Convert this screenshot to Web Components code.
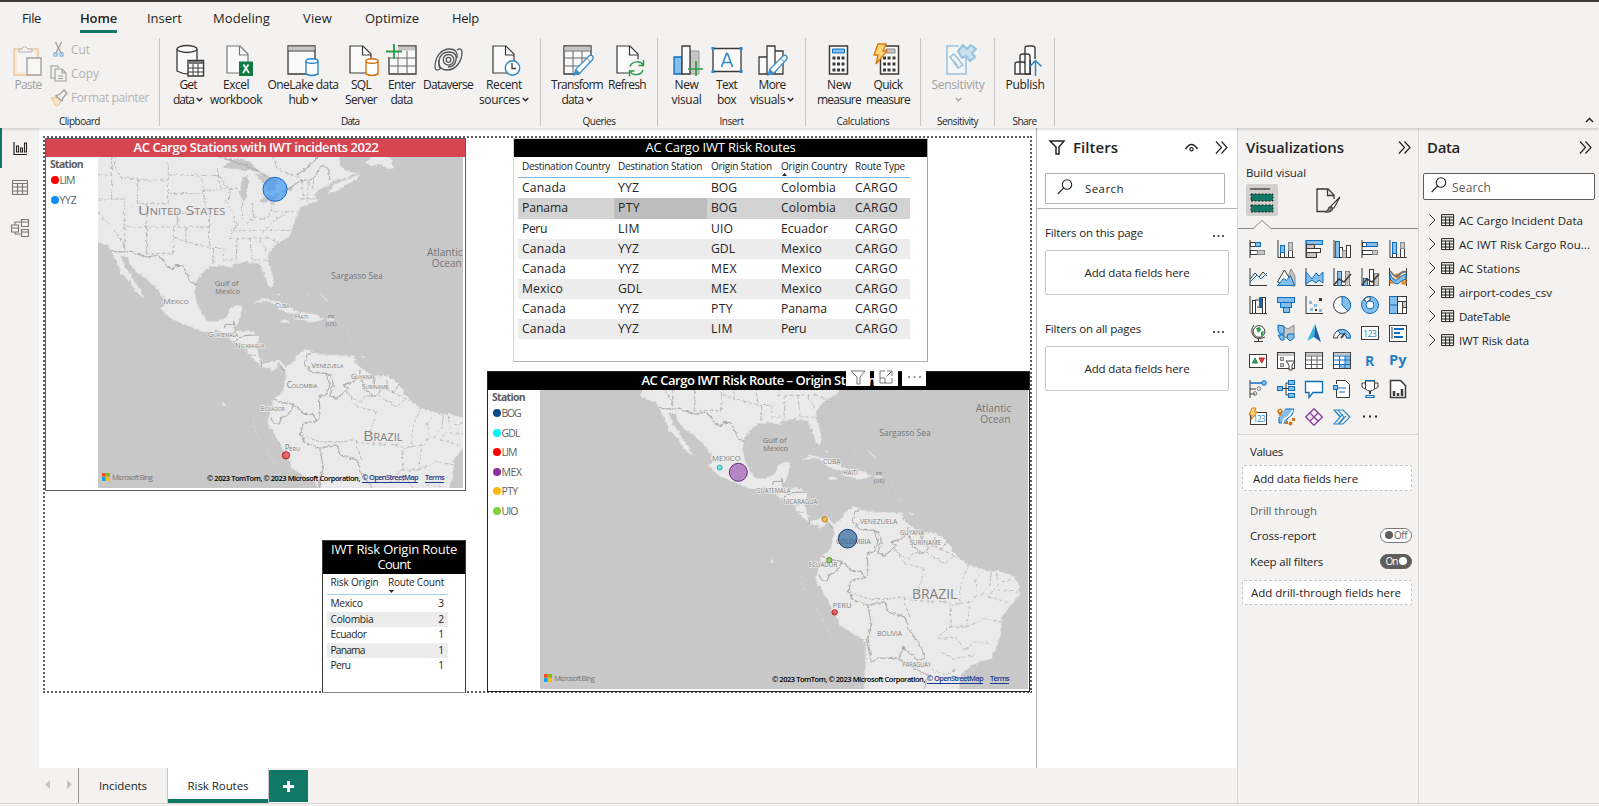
<!DOCTYPE html>
<html lang="en">
<head>
<meta charset="utf-8">
<title>Risk Routes</title>
<style>
html,body{margin:0;height:100%;overflow:hidden}
body{font:12px "Open Sans","Noto Sans",sans-serif;color:#252423;background:#f3f2f1}
</style>
</head>
<body>
<report-app></report-app>
<script>
const define = (name, render) => customElements.define(name, class extends HTMLElement {
  connectedCallback() {
    if (this.shadowRoot) return;
    this.attachShadow({mode: 'open'}).innerHTML = render(this);
  }
});

/* A single line of text, tracked so that it fills its given width. */
customElements.define('fit-text', class extends HTMLElement {
  connectedCallback() {
    if (this.shadowRoot) return;
    const w = +this.getAttribute('w');
    this.attachShadow({mode: 'open'}).innerHTML =
      `<style>:host{display:inline-block;white-space:nowrap;text-align:left;flex:none;width:${w}px}span{display:inline-block;text-decoration:inherit}</style><span><slot></slot></span>`;
    const s = this.shadowRoot.querySelector('span');
    const n = this.textContent.length;
    s.style.letterSpacing = ((w - s.getBoundingClientRect().width) / n).toFixed(3) + 'px';
  }
});
const ft = (t, w, style = '') => `<fit-text w="${w}" style="${style}">${t}</fit-text>`;

/* ---------- icons ---------- */
const K = '#3b3a39', B = '#0f6cbd', L = '#83beec', G = '#c8c6c4';
const doc = `<path d="M3 2h13l8 8v19H3z" fill="#fafafa" stroke="${K}" stroke-width="1.2"/><path d="M15.500 2v9h8.500" fill="none" stroke="${K}" stroke-width="1.2"/>`;
const pencil = `<path d="M12 31l2-6L27 12q2-1.500 3.500 0t0 3.500L18 29z" fill="#fff" stroke="#3a8fce" stroke-width="1.300"/><path d="M12 31l2-6 4 4z" fill="#3a8fce"/><path d="M24.500 14l4 4" stroke="#3a8fce"/>`;
const cyl = (c) => `<path d="M19 17v13q6 3 12 0V17" fill="#fff" stroke="${c}" stroke-width="1.400"/><ellipse cx="25" cy="17" rx="6" ry="2.200" fill="#fff" stroke="${c}" stroke-width="1.400"/>`;
const big = {
  paste: `<g opacity=".5"><path d="M2 5h24v26H2z" fill="#fbe5c0" stroke="#e8a55a" stroke-width="1.600"/><path d="M5 8h18v20H5z" fill="#f7f6f5"/><path d="M7 8V5h3q2-5 6 0h4v3z" fill="#f3f2f1" stroke="#777"/><path d="M15 14h14v17H15z" fill="#fafafa" stroke="#555" stroke-width="1.400"/></g>`,
  getdata: `<path d="M3 5v22q9 5 20 1V5" fill="#fafafa" stroke="${K}" stroke-width="1.300"/><ellipse cx="13" cy="5" rx="10" ry="3.500" fill="#fafafa" stroke="${K}" stroke-width="1.300"/><path d="M14 16.500h15.500V32H14z" fill="#fff" stroke="${K}" stroke-width="1.400"/><path d="M14 18.500h15" stroke="#777" stroke-width="3"/><path d="M14 24h15M14 28h15M19 20v12M24 20v12" stroke="${K}"/>`,
  excel: doc.replaceAll(K, '#777') + `<path d="M15 17.500h14V32H15z" fill="#107c41"/><path d="M19.500 20.500l5.500 8.500M24.500 20.500l-5.500 8.500" stroke="#fff" stroke-width="1.800"/>`,
  onelake: `<path d="M1 2h27v28H1z" fill="#fafafa" stroke="${K}" stroke-width="1.300"/><path d="M1.500 4.500h26" stroke="${G}" stroke-width="4"/><path d="M1 7h27" stroke="${K}"/>` + cyl('#2b88c8'),
  sql: doc + cyl('#d8700f'),
  enter: `<path d="M3 2h27v28H3z" fill="#fafafa" stroke="${K}" stroke-width="1.300"/><path d="M12 4.500h17" stroke="${G}" stroke-width="4"/><path d="M3 14h27M3 22h27M12 7v23M21 7v23" stroke="#666"/><path d="M0 0h12v13H0z" fill="#f3f2f1"/><path d="M8 0v15M0 7.500h16" stroke="#2a9d4a" stroke-width="1.800"/>`,
  dataverse: `<g fill="none" stroke="#555" stroke-width="1.300"><path d="M24 6c3-2 5-1 5 2 0 8-5 18-15 18-6 0-9-4-8-9 1-6 5-9 10-9 6 0 8 4 7 8-1 5-4 7-8 7"/><path d="M7 25c-3 2-5 1-5-2C2 14 7 5 17 5c6 0 8 5 7 9M8 25c-2-1-3-5-2-9"/><ellipse cx="15.500" cy="15.800" rx="5.300" ry="5.300"/><ellipse cx="15.500" cy="15.800" rx="2.300" ry="2.500"/></g>`,
  recent: doc + `<circle cx="22.500" cy="24" r="7.200" fill="#fff" stroke="#2b88c8" stroke-width="1.400"/><path d="M22 19v5.500h4" fill="none" stroke="${K}" stroke-width="1.300"/>`,
  transform: `<path d="M2 2h27v28H2z" fill="#fafafa" stroke="${K}" stroke-width="1.300"/><path d="M2.500 4.500h26" stroke="${G}" stroke-width="4"/><path d="M2 7h27M2 14h27M2 22h27M11 7v23M20 7v23" stroke="#666"/><path d="M17 31l14-16v17z" fill="#f3f2f1"/>` + pencil,
  refresh: doc + `<circle cx="22.500" cy="24" r="9" fill="#f3f2f1"/><path d="M16 22.500c2-6 11-6 13-1M29.500 16v5.500h-5M29 26c-2 6-11 6-13 1M15.500 32.500V27h5" fill="none" stroke="#2a9d4a" stroke-width="1.500"/>`,
  newvisual: `<path d="M19 7h9v23h-9z" fill="${G}" stroke="#999"/><path d="M3 13h8v17H3z" fill="${L}" stroke="${B}" stroke-width="1.300"/><path d="M11 2h8v28h-8z" fill="#fafafa" stroke="${K}" stroke-width="1.300"/><path d="M25 17v15M17 25h15" stroke="#2a9d4a" stroke-width="1.700"/>`,
  textbox: `<path d="M2 4.500h28v23H2z" fill="#fafafa" stroke="${K}" stroke-width="1.300"/><path d="M.5 3h3v3h-3zM28.500 3h3v3h-3zM.5 26h3v3h-3zM28.500 26h3v3h-3z" fill="#2b88c8"/><path d="M10.500 23L15.500 9.500h1L21.500 23M12.500 18.500h7" fill="none" stroke="#2b88c8" stroke-width="1.600"/>`,
  morevisuals: `<path d="M3 13h8v17H3zM19 7h8v23h-8zM11 2h8v28h-8z" fill="#fafafa" stroke="${K}" stroke-width="1.300"/>` + pencil,
  calc: `<path d="M6.500 2h18v28h-18z" fill="#fafafa" stroke="${K}" stroke-width="1.500"/><path d="M9.500 5h12v4h-12z" fill="${L}" stroke="${B}"/><path d="M11 12.500v16M15.500 12.500v16M20 12.500v16" stroke="${K}" stroke-width="3" stroke-dasharray="3 3"/>`,
  quick: `<path d="M8.500 2h18v28h-18z" fill="#fafafa" stroke="${K}" stroke-width="1.500"/><path d="M14 5h9v4h-9z" fill="${G}" stroke="#888"/><path d="M12.500 12.500v16M17 12.500v16M22 12.500v16" stroke="${K}" stroke-width="3" stroke-dasharray="3 3"/><path d="M6 0h8l-3 7h4L4 20l2-9H2z" fill="#fcd679" stroke="#e07a10" stroke-width="1.400"/>`,
  sens: `<g opacity=".45" fill="none" stroke="#2b88c8"><path d="M21 12v18H2V2h12" stroke-width="1.500" fill="#f6fafd"/><path d="M9 10l9 11-5 3-8-11zM8 16l5 6M12 13l4 6" stroke-width="1.400"/><path d="M13 7l5-6 4 4 4-4 5 4-4 4 3 4-5 4-4-5-4 2z" fill="#9cc9e8" stroke-width="2"/></g>`,
  publish: `<g fill="#fafafa" stroke="${K}" stroke-width="1.400"><path d="M12 30V4q0-2 3-2h4q3 0 3 2v26zM7 30V12q0-2 3-2h4q3 0 3 2v18zM2 30V20q0-2 3-2h5q2 0 2 2v10z"/></g><path d="M18 15h10v17H18z" fill="#f3f2f1"/><path d="M17.300 16v14H12" stroke="${K}" stroke-width="1.300"/><path d="M22.500 32V17M17 22.500l5.500-6 6 6" fill="none" stroke="#2b88c8" stroke-width="1.500"/>`
};
const nudge = {getdata: 2, excel: 4, sql: 2, recent: 1.5, refresh: 3, transform: 1, publish: 4, sens: 3, dataverse: 1};
const svg = (body, w = 32, h = w, vb = `0 0 ${w} ${h}`) => `<svg width="${w}" height="${h}" viewBox="${vb}" fill="none" overflow="visible">${body}</svg>`;
const dbl = svg(`<path d="M1 .5l5.500 6L1 12.500M6.500.5l5.500 6-5.500 6" stroke="#252423" stroke-width="1.200"/>`, 14, 13);
const mag = svg(`<circle cx="10" cy="5.500" r="4.700" stroke="#252423" stroke-width="1.100"/><path d="M6.700 9L.7 15" stroke="#252423" stroke-width="1.100"/>`, 16, 16);
const chev = svg(`<path d="M.7 1L3.500 3.800 6.300 1" stroke="currentColor" stroke-width="1.400"/>`, 7, 5);

/* ---------- ribbon ---------- */
define('ribbon-button', el => {
  const lines = el.getAttribute('lines').split('|').map(l => l.split(':'));
  const icon = el.getAttribute('icon');
  return `<style>:host{display:flex;flex-direction:column;align-items:center;width:${el.getAttribute('w')}px;font-size:12px;line-height:15.300px;flex:none}
  svg{display:block}.i{height:33px;padding-left:${(nudge[icon] || 0) * 2}px}.l{display:flex;align-items:center;gap:2px;height:15.300px;justify-content:center}:host([dim]){color:#a19f9d}</style>
  <div class="i">${svg(big[icon])}</div>${lines.map(l => `<div class="l">${l[0] ? ft(l[0], l[1]) : ''}${l[2] ? chev : ''}</div>`).join('')}`;
});
define('ribbon-group', el => `<style>:host{display:flex;flex-direction:column;justify-content:space-between;box-sizing:border-box;width:${el.getAttribute('w')}px;height:88px;border-right:1px solid #c8c6c4;flex:none}
  .b{display:flex;padding:6px 0 0 ${el.getAttribute('pad') || 0}px}.n{display:flex;justify-content:center;font-size:10px;line-height:12px;margin-bottom:-1px}</style>
  <div class="b"><slot></slot></div><div class="n">${ft(el.getAttribute('name'), el.getAttribute('nw'))}</div>`);
const rb = (icon, w, lines, extra = '') => `<ribbon-button icon="${icon}" w="${w}" lines="${lines}" ${extra}></ribbon-button>`;
define('clip-tools', () => `<style>:host{display:flex;flex-direction:column;color:#b5b3b1;font-size:12px;padding:0 0 0 1px;margin-top:-7px}
  div{display:flex;height:24px;align-items:center;gap:4px}svg{opacity:.6}</style>
  <div>${svg('<path d="M5.500 1l6 12M11.500 1l-6 12" stroke="#666" stroke-width="1.300"/><rect x="4" y="12" width="3" height="3" stroke="#3a8fce" stroke-width="1.300"/><rect x="10" y="12" width="3" height="3" stroke="#3a8fce" stroke-width="1.300"/>', 17)}${ft('Cut', 19)}</div>
  <div>${svg('<path d="M8 3V1H1v12h4M5 4h7l4 4v8H5zM12 4v4h4M8 11h5M8 13.500h5" stroke="#666" stroke-width="1.100"/>', 17)}${ft('Copy', 28)}</div>
  <div>${svg('<path d="M1 9l6-1 4 4-2 4-3 1z" fill="#fbd9a8" stroke="#e8a55a"/><path d="M6 7l6 5 1-3 4-5-3-3-4 4z" stroke="#666" stroke-width="1.300"/>', 17)}${ft('Format painter', 78)}</div>`);
define('ribbon-bar', () => {
  const tabs = [['File', 19, 22], ['Home', 37, 39], ['Insert', 35, 30], ['Modeling', 57, 31], ['View', 29, 33], ['Optimize', 54, 33], ['Help', 27, 33]];
  return `<style>:host{display:flex;flex-direction:column;height:128px;background:#f3f2f1;border-top:2px solid #3b3a39;box-sizing:border-box;box-shadow:0 1px 3px #0003;position:relative;z-index:2}
  nav{display:flex;height:31px;font-size:13px;line-height:33px;margin-bottom:5px}nav span{height:28px}
  nav .on{font-weight:600;border-bottom:3px solid #117865}
  .r{display:flex;align-items:flex-start}.c{margin-left:auto;margin-right:5px;align-self:flex-end;height:16px}</style>
  <nav>${tabs.map(t => `<span class="${t[0] == 'Home' ? 'on' : ''}" style="margin-left:${t[2]}px">${ft(t[0], t[1])}</span>`).join('')}</nav>
  <div class="r">
  <ribbon-group w="160" pad="12" name="Clipboard" nw="41">${rb('paste', 32, 'Paste:27', 'dim')}<clip-tools style="margin-left:5px"></clip-tools></ribbon-group>
  <ribbon-group w="381" pad="6" name="Data" nw="18">${rb('getdata', 44, 'Get:17|data:21:1')}${rb('excel', 52, 'Excel:26|workbook:52')}${rb('onelake', 82, 'OneLake data:71|hub:20:1')}${rb('sql', 34, 'SQL:20|Server:32')}${rb('enter', 47, 'Enter:27|data:22')}${rb('dataverse', 46, 'Dataverse:50')}${rb('recent', 66, 'Recent:36|sources:41:1')}</ribbon-group>
  <ribbon-group w="117" pad="8" name="Queries" nw="33">${rb('transform', 56, 'Transform:52|data:22:1')}${rb('refresh', 44, 'Refresh:38')}</ribbon-group>
  <ribbon-group w="148" pad="6" name="Insert" nw="24">${rb('newvisual', 45, 'New:24|visual:30')}${rb('textbox', 35, 'Text:21|box:19')}${rb('morevisuals', 56, 'More:27|visuals:35:1')}</ribbon-group>
  <ribbon-group w="115" pad="8" name="Calculations" nw="53">${rb('calc', 50, 'New:24|measure:44')}${rb('quick', 48, 'Quick:29|measure:44')}</ribbon-group>
  <ribbon-group w="74" name="Sensitivity" nw="41">${rb('sens', 74, 'Sensitivity:53|::1', 'dim')}</ribbon-group>
  <ribbon-group w="60" name="Share" nw="24">${rb('publish', 60, 'Publish:39')}</ribbon-group>
  <span class="c">${svg('<path d="M1 5l3.500-3.500L8 5" stroke="#252423" stroke-width="1.500"/>', 9, 6)}</span></div>`;
});

/* ---------- view rail ---------- */
define('view-rail', () => `<style>:host{display:flex;flex-direction:column;width:39px;background:#f3f2f1;flex:none}
  div{height:40px;display:flex;align-items:center;justify-content:center;box-sizing:border-box}div.on{border-left:2px solid #117865;padding-right:1px}svg{display:block}</style>
  <div class="on">${svg('<path d="M1 1v12.500h13" stroke="#252423" stroke-width="1.200"/><path d="M3.500 5h2v6h-2zM7.500 7h2v4h-2zM11.500 2h2v9h-2z" stroke="#252423" stroke-width="1.100"/>', 15)}</div>
  <div style="padding-bottom:2px">${svg('<path d="M.5.5h15v14H.5zM.5 3.500h15M.5 7h15M.5 11h15M5.500 3v12M10.500 3v12" stroke="#797775" stroke-width="1.100"/>', 16, 15)}</div>
  <div>${svg('<path d="M.5 6h7v7h-7zM.5 9h7M10.500.500h7v7h-7zM10.500 3h7M10.500 10.500h7v7h-7zM10.500 13h7M4 6V3h6M4 13v2h6" stroke="#797775" stroke-width="1.100"/>', 18)}</div>`);

/* ---------- map ---------- */
const coast = 'M280 90V345L325 362 333 375 345 400 352 418 362 430 362 447 385 462 398 485 408 500 430 520 433 512 420 492 405 472 393 455 385 440 370 418 362 395 374 390 385 398 388 415 400 430 415 445 440 462 460 480 478 500 490 515 493 540 485 548 490 562 520 585 560 600 600 618 625 620 650 612 665 628 690 642 700 652 720 657 738 668 748 690 765 705 785 725 808 728 820 738 832 728 828 716 838 714 846 722 857 735 858 760 850 795 838 812 820 822 815 850 803 888 808 905 825 928 845 965 868 1010 875 1030 900 1045 935 1065 953 1082 955 1130 945 1250H1228L1240 1175 1280 1145 1328 1130 1344 1100 1360 1050 1360 1005 1392 965 1414 940 1412 905 1392 880 1350 868 1330 868 1285 858 1262 850 1225 822 1210 800 1195 775 1165 755 1120 752 1090 735 1062 712 1065 694 1010 692 970 690 935 682 925 672 890 690 880 710 862 722 857 728 850 715 835 705 815 712 790 718 780 700 770 682 773 650 780 632 755 620 715 618 705 612 715 590 722 570 728 545 712 540 690 550 683 575 655 590 625 590 608 570 590 535 583 500 590 470 600 450 630 425 660 420 695 428 700 415 740 410 780 415 790 440 800 465 808 485 816 490 820 470 815 440 802 410 805 385 830 358 850 345 870 330 878 305 885 285 895 265 900 245 920 240 950 228 942 210 955 195 985 180 1000 165 1040 158 1078 142 1060 144 1030 136 1018 118 1022 90Z';
const lands = 'M1095 112L1125 90 1172 96 1180 130 1160 128 1145 118 1110 122ZM985 205L1000 180 1040 165 1080 148 1070 162 1030 185 1000 202ZM762 534L790 520 830 527 868 548 900 562 868 566 848 555 812 530 790 528ZM882 578L905 564 942 568 972 582 935 592 910 584ZM840 586L855 584 868 590 855 593ZM980 578H1002V586H980ZM668 832L678 838 674 843ZM1085 692h10v4h-10ZM835 508h8v3h-8ZM960 505l22 20-4 1Z';
const lakes = 'M728 160L738 152 748 158 742 190 738 222 724 226 718 205ZM668 128L705 100 745 105 772 134 748 138 715 132ZM762 145L800 150 830 165 828 195 808 200 790 175ZM780 228L800 212 838 205 830 220 792 234ZM842 198L880 182 876 194 848 204ZM388 232l10 12-3 2Z';
const border = 'M333 375L345 380 400 382 440 396 470 391 490 405 500 425 520 432 525 422 545 422 555 435 572 472 592 478M672 612L678 598H700L698 590 708 588M702 588L706 612 690 640M700 650L730 632 775 630M742 668L775 660M750 690L768 690M785 725L783 708M845 722L850 738M935 680L920 690 915 720 935 742 978 745 990 778 980 808 958 815 960 880 948 888 940 868 915 868 880 838 845 832 820 822M880 838L872 862 845 878 838 895 820 893 812 878M978 745L992 752 1000 778 990 812 1010 822 1045 790 1030 780 1060 770 1080 750M1080 735L1078 760 1095 775 1092 790 1120 815 1140 800 1135 785 1165 795 1160 765M1120 752L1125 790M1165 795L1180 800 1200 778M948 888L910 895 900 930 920 955 960 970 1010 958 1020 990 1070 1005 1085 1045 1120 1095 1130 1130 1110 1135 1065 1095 1052 1130 990 1128 970 1140 955 1070M960 970L970 1030 960 1070 970 1140M1052 1130L1110 1165 1140 1180 1130 1220M860 195L900 168 940 162 965 122 985 130 990 165M820 165L760 130 650 90M890 150L930 120 960 90';
const states = 'M294 222H374L374 306H628M374 306V400M335 90V222M346 90V130L366 160H412V236H505V90M412 165H505M505 150L658 152M505 205L605 206M505 265H532V306M440 236V386M532 262H625M605 195H670M628 280V370L680 370M520 308V386H440M440 308V380M558 308V350L628 368M625 265L628 306M605 160L612 220 622 262M658 152L690 200 688 225M652 130L660 190H718M676 225L700 270 710 300 690 340M690 316H878M690 340H800M728 228L727 285L700 312M758 230V285L730 300M758 275L790 285 812 262 822 230 800 228M712 340L708 410M750 340L756 408M780 340L800 380M756 405H800M640 370L642 420M672 370L670 405H698M800 335L848 362M815 232V260H895M905 168L912 222M925 168L922 235M940 165V200M900 222H945M790 320L830 280 860 268M820 90L830 130 900 160M520 338L558 350M294 150H335M294 260L370 350 374 370M900 930L960 950 1030 950 1060 945 1090 955 1205 960M1130 860L1112 920 1090 955M1180 800L1230 830M1030 780L1050 815 1080 830 1100 812 1140 815 1190 845 1220 820M1050 815L1075 850 1095 850 1130 860M1262 850L1240 900 1235 965 1210 970 1205 1035 1170 1065M1235 965L1270 960 1290 935 1280 900 1300 870M1330 870L1325 910 1300 940M1345 870L1350 910 1320 945 1380 960M1360 900L1395 895M1350 925L1410 930M1205 1035L1255 1035 1310 1010 1360 1020M1255 1035L1265 970M1170 1070L1220 1065 1250 1105 1280 1080 1330 1085M1180 1110L1220 1130 1280 1120M1150 1160L1190 1180 1230 1160M1065 945L1085 1005M1205 960L1210 1035';
/* text, x, baseline y, width, size, map style */
const labels = [
  ['United States', 414, 270, 262, 40, 1], ['Mexico', 490, 538, 76, 24, 1], ['Cuba', 824, 549, 44, 22, 1], ['Haiti', 884, 581, 42, 22, 1], ['Guatemala', 624, 637, 90, 22, 1], ['Nicaragua', 706, 669, 88, 22, 1], ['Venezuela', 934, 728, 96, 23, 1], ['Guyana', 1053, 761, 64, 21, 1], ['Suriname', 1085, 793, 80, 21, 1], ['Colombia', 860, 789, 92, 25, 1], ['Ecuador', 782, 858, 72, 23, 1], ['Peru', 854, 977, 46, 25, 1], ['Brazil', 1090, 949, 118, 46, 1],
  ['MEXICO', 492, 537, 86, 20, 2], ['CUBA', 825, 546, 52, 19, 2], ['HAITI', 886, 578, 44, 19, 2], ['GUATEMALA', 625, 634, 102, 19, 2], ['NICARAGUA', 706, 665, 102, 19, 2], ['VENEZUELA', 936, 725, 112, 20, 2], ['GUYANA', 1056, 758, 72, 19, 2], ['SURINAME', 1085, 790, 94, 20, 2], ['COLOMBIA', 864, 785, 104, 21, 2], ['ECUADOR', 782, 856, 86, 20, 2], ['PERU', 854, 977, 56, 22, 2], ['BRAZIL', 1092, 950, 136, 43, 2], ['BOLIVIA', 988, 1062, 74, 22, 2], ['PARAGUAY', 1063, 1155, 86, 20, 2]
];
const seas = [['Gulf of', 644, 482, 72, 23], ['Mexico', 646, 507, 74, 23], ['Sargasso Sea', 994, 461, 154, 25], ['Atlantic', 1281, 392, 107, 32], ['Ocean', 1295, 426, 90, 32], ['PR', 984, 583, 18, 18], ['(US)', 977, 602, 32, 18]];
define('bing-map', el => {
  const [x, y, w, h] = el.getAttribute('view').split(' ').map(Number);
  const kind = +el.getAttribute('kind');
  const txt = (t, sc) => `<text x="${t[1]}" y="${t[2]}" textLength="${t[3]}" lengthAdjust="spacingAndGlyphs" font-size="${t[4]}" ${sc ? 'font-variant="small-caps"' : ''}>${t[0]}</text>`;
  const pins = JSON.parse(el.getAttribute('pins'));
  return `<style>:host{display:block;position:relative;width:${w}px;height:${h}px;overflow:hidden}svg{display:block}
  .cr{position:absolute;right:19px;bottom:4px;display:flex;gap:7px;font-size:7.500px;line-height:12px;color:#000;font-weight:600}.cr a{color:#1a3a8f;line-height:8px;height:9px;border-bottom:1px solid #1a3a8f;margin-top:1px}
  .bg{position:absolute;left:4px;bottom:5px;display:flex;gap:2px;align-items:center;font-size:7.500px;line-height:12px;color:#777}</style>
  <svg width="${w}" height="${h}" viewBox="${x * 3} ${(y - 125) * 3} ${w * 3} ${h * 3}">
  <defs><filter id="f" x="0" y="0" width="100%" height="100%"><feTurbulence type="fractalNoise" baseFrequency=".09" numOctaves="3" seed="4"/><feDisplacementMap in="SourceGraphic" scale="12" xChannelSelector="R" yChannelSelector="G"/></filter></defs>
  <rect x="-100" y="0" width="1700" height="1300" fill="#c8c8c8"/>
  <g filter="url(#f)"><rect x="-100" y="0" width="1700" height="1300" fill="#c8c8c8"/><path d="${coast}${lands}" fill="#eaeaea" stroke="#e2e2e2" stroke-width="2"/><path d="${lakes}" fill="#c8c8c8"/>
  <path d="${states}" fill="none" stroke="#b9b4b4" stroke-width="2.600" stroke-dasharray="12 5"/><path d="${border}" fill="none" stroke="#b3adad" stroke-width="3.500"/>
  <path d="M760 880Q762 930 790 960T850 1070M880 510l10 4M920 510l8 3M1030 600l20 40M1055 650l5 15" fill="none" stroke="#d4d4d4" stroke-width="2.500" stroke-dasharray="12 6"/></g>
  <g font-family="Open Sans,Noto Sans,sans-serif" fill="#808080" stroke="#ececec" stroke-width="4" paint-order="stroke" stroke-linejoin="round">${labels.filter(l => l[5] == kind).map(l => txt(l, kind == 1)).join('')}</g>
  <g font-family="Open Sans,Noto Sans,sans-serif" fill="#757575">${seas.map(l => txt(kind == 2 && l[1] > 1200 ? [l[0], l[1] + 2, l[2] - 2, l[3], l[4]] : l)).join('')}</g>
  ${pins.map(p => `<circle cx="${p[0]}" cy="${p[1]}" r="${p[2]}" fill="${p[3]}" fill-opacity=".65" stroke="${p[4]}" stroke-width="3"/>`).join('')}</svg>
  <div class="bg">${svg('<path d="M0 0h3.700v3.700H0z" fill="#f25022"/><path d="M4.200 0h3.700v3.700H4.200z" fill="#7fba00"/><path d="M0 4.200h3.700v3.700H0z" fill="#00a4ef"/><path d="M4.200 4.200h3.700v3.700H4.200z" fill="#ffb900"/>', 8)}${ft('Microsoft Bing', 40)}</div>
  <div class="cr">${ft('© 2023 TomTom, © 2023 Microsoft Corporation,', 153, 'margin-right:-5px')}<a>${ft('© OpenStreetMap', 56)}</a><a>${ft('Terms', 19)}</a></div>`;
});
define('map-legend', el => `<style>:host{display:flex;flex-direction:column;color:#605e5c;font-size:10.500px;width:52px;flex:none;box-sizing:border-box;padding:0 0 0 4px}
  b{font-size:10.500px;line-height:15px;height:13.500px}div{display:flex;align-items:center;gap:1px;height:19.500px}i{width:8px;height:8px;border-radius:50%;margin-left:.5px}</style>
  <b>${ft('Station', 33)}</b>${JSON.parse(el.getAttribute('items')).map(t => `<div><i style="background:${t[1]}"></i>${ft(t[0], t[2])}</div>`).join('')}`);

/* ---------- visual card ---------- */
define('report-visual', el => `<style>:host{display:flex;flex-direction:column;position:absolute;box-sizing:border-box;background:#fff}
  header{background:${el.getAttribute('head') || '#000'};color:#fff;font-size:13px;text-align:center;flex:none;display:flex;flex-direction:column;align-items:center;line-height:15px;padding:1px 0 2px;${el.hasAttribute('bold') ? 'font-weight:600' : ''}}
  .b{display:flex;flex:1;min-height:0}</style>
  <header><slot name="title"></slot></header><div class="b"><slot></slot></div>`);
define('hover-actions', () => `<style>:host{position:absolute;left:358px;top:-4px;display:flex;gap:4px}span{width:24px;height:18px;background:#fff;display:flex;align-items:center;justify-content:center}</style>
  <span>${svg('<path d="M1 1h14L10 7v7H7V7z" stroke="#777" stroke-width="1"/>', 16, 15)}</span><span>${svg('<path d="M6 1H1v12h12V8M1 8h5v5M8 1h5v5M13 1L7.500 6.500" stroke="#777" stroke-width="1"/>', 14)}</span><span>${svg('<path d="M1 1h2M6.500 1h2M12 1h2" stroke="#777" stroke-width="1.600"/>', 15, 3)}</span>`);

define('routes-table', () => {
  const W = {Canada: 44, Panama: 46, Peru: 25, Mexico: 41, YYZ: 21, PTY: 22, LIM: 22, GDL: 24, BOG: 26, UIO: 22, MEX: 26, Colombia: 55, Ecuador: 47, CARGO: 43};
  const rows = ['Canada YYZ BOG Colombia', 'Panama PTY BOG Colombia', 'Peru LIM UIO Ecuador', 'Canada YYZ GDL Mexico', 'Canada YYZ MEX Mexico', 'Mexico GDL MEX Mexico', 'Canada YYZ PTY Panama', 'Canada YYZ LIM Peru'];
  return `<style>:host{display:block;margin-left:4px;width:392px}.g{display:grid;grid-template-columns:96px 93px 70px 74px 59px}
  .h{font-size:10px;height:20px;border-bottom:1px solid #7ab8ec;line-height:18px;margin-bottom:.3px}.r{height:20.120px;font-size:12.200px;line-height:20px;color:#252423}.g>*{padding-left:4px}.h>*{position:relative}
  .r:nth-of-type(odd){background:#ececec}.r.s{background:#d3d3d3}.r.s :nth-child(2){background:#bdbdbd}u{position:absolute;left:5px;top:15px;line-height:0}</style>
  <div class="g h"><div>${ft('Destination Country', 88)}</div><div>${ft('Destination Station', 84)}</div><div>${ft('Origin Station', 61)}</div><div>${ft('Origin Country', 66)}<u>${svg('<path d="M0 3L2.500 0 5 3z" fill="#252423"/>', 5, 3)}</u></div><div>${ft('Route Type', 50)}</div></div>
  ${rows.map((r, i) => `<div class="g r ${i == 1 ? 's' : ''}">${(r + ' CARGO').split(' ').map(c => `<div>${ft(c, W[c])}</div>`).join('')}</div>`).join('')}`;
});
define('count-table', () => {
  const rows = [['Mexico', 3, 32], ['Colombia', 2, 43], ['Ecuador', 1, 36], ['Panama', 1, 34], ['Peru', 1, 20]];
  return `<style>:host{display:block;margin-left:4px;width:121px;font-size:10px}div{display:flex;justify-content:space-between;padding:0 4px 0 3.500px}.h{height:20px;border-bottom:1px solid #a8d2f5;line-height:16px;margin-bottom:1px;position:relative;font-size:10px}
  .r{height:15.600px;line-height:15.600px;font-size:10.200px}.r:nth-of-type(odd){background:#ececec}u{position:absolute;left:62px;top:15px;line-height:0}</style>
  <div class="h">${ft('Risk Origin', 48)}${ft('Route Count', 56)}<u>${svg('<path d="M0 0L2.500 3 5 0z" fill="#252423"/>', 5, 3)}</u></div>
  ${rows.map(r => `<div class="r">${ft(r[0], r[2])}<span>${r[1]}</span></div>`).join('')}`;
});

/* ---------- canvas: visuals keep their free position on the page ---------- */
define('report-canvas', () => {
  const c = '#605e5c';
  return `<style>:host{display:block;flex:1;background:#fff;position:relative;overflow:hidden}
  .p{position:absolute;left:4px;top:8px;width:989px;height:557px;background:repeating-linear-gradient(90deg,${c} 0 2px,transparent 2px 4px) 0 0/100% 2px no-repeat,repeating-linear-gradient(90deg,${c} 0 2px,transparent 2px 4px) 0 100%/100% 2px no-repeat,repeating-linear-gradient(${c} 0 2px,transparent 2px 4px) 0 0/2px 100% no-repeat,repeating-linear-gradient(${c} 0 2px,transparent 2px 4px) 100% 0/2px 100% no-repeat}</style>
  <div class="p">
  <report-visual head="#d64550" bold style="left:2px;top:2px;width:421px;height:353px;border:1px solid #605e5c">
    <span slot="title">${ft('AC Cargo Stations with IWT incidents 2022', 245, 'margin-left:1px')}</span>
    <map-legend items='[["LIM","#f00",15],["YYZ","#118dff",17]]'></map-legend>
    <bing-map kind="1" view="98 157 365 331" pins='[[825,193,36,"#2f92f5","#1c62c9"],[858,991,11,"#e8262a","#b81e24"]]'></bing-map>
  </report-visual>
  <report-visual style="left:470px;top:2px;width:415px;height:224px;border:1px solid #d5d5d5;border-right-color:#a8a8a8;border-bottom-color:#b5b5b5">
    <span slot="title">${ft('AC Cargo IWT Risk Routes', 150)}</span><routes-table></routes-table>
  </report-visual>
  <report-visual bold style="left:444px;top:235px;width:543px;height:321px;border:1px solid #252423">
    <span slot="title">${ft('AC Cargo IWT Risk Route – Origin Station', 234)}</span>
    <map-legend items='[["BOG","#0b4a8a",19],["GDL","#00f5f5",18],["LIM","#f00",15],["MEX","#8a2f9e",20],["PTY","#fcb714",16],["UIO","#7fd13b",16]]'></map-legend>
    <bing-map kind="2" view="-8 233 488 299" pins='[[515,557,7.500,"#2de0e0","#25b5b5"],[571,571,27,"#9a4fb0","#6b2a80"],[830,712,8,"#f5a81c","#c08018"],[899,770,28,"#1f5a94","#173e7a"],[844,834,8,"#7cc83e","#5a9a2a"],[860,991,8,"#e8262a","#b81e24"]]'></bing-map>
    <hover-actions></hover-actions>
  </report-visual>
  <report-visual style="left:279px;top:404px;width:144px;height:153px;border:1px solid #3b3a39;border-bottom-color:#888">
    <span slot="title" style="text-align:center">${ft('IWT Risk Origin Route', 126)}<br>${ft('Count', 33)}</span><count-table></count-table>
  </report-visual>
  </div>`;
});

/* ---------- page tabs ---------- */
define('page-tabs', () => `<style>:host{display:flex;height:35px;background:#f3f2f1;align-items:stretch;font-size:11.500px}
  .a{display:flex;align-items:center;justify-content:space-between;padding:0 0 2px 0;box-sizing:border-box;width:27px}.n{width:88px;border-left:1px solid #979593;display:flex;align-items:center;justify-content:center}
  .s{width:100px;background:#fff;border:solid #c8c6c4;border-width:0 1px;box-shadow:inset 0 -4px #117865;display:flex;align-items:center;justify-content:center}.p{width:39px;background:#117865;margin:2px 0 1px;display:flex;align-items:center;justify-content:center}</style>
  <div class="a" style="margin:0 6px">${svg('<path d="M5 0v9L0 4.500z" fill="#c8c6c4"/>', 5, 9)}${svg('<path d="M0 0v9l5-4.500z" fill="#c8c6c4"/>', 5, 9)}</div>
  <div class="n">${ft('Incidents', 48)}</div><div class="s">${ft('Risk Routes', 61)}</div><div class="p">${svg('<path d="M0 5.500h11M5.500 0v11" stroke="#fff" stroke-width="3"/>', 11)}</div>`);

/* ---------- filters pane ---------- */
define('filters-pane', () => `<style>:host{display:flex;flex-direction:column;box-sizing:border-box;width:201px;background:#fff;border-left:1px solid #b3b0ad;font-size:11.500px;flex:none}
  .t{display:flex;align-items:center;height:38px;padding:0 8px 0 12px;font-size:15px;font-weight:600}.t .f{margin-left:8px}.t .e{margin:0 17px 0 auto;line-height:0}.t svg{display:block}
  .s{border:1px solid #b3b0ad;border-radius:1px;width:167px;height:29px;margin:7px 0 0 8px;display:flex;align-items:center;gap:13px;padding-left:11px;box-sizing:content-box}
  .s svg{margin-bottom:3px}.s fit-text{margin-left:-1px}
  hr{border:0;border-top:1px solid #b3b0ad;margin:4px 0 0;width:100%}
  .l{display:flex;justify-content:space-between;padding:0 13px 0 8px;line-height:16px;margin:16px 0 9px}.l svg{align-self:flex-end;margin-bottom:4px}
  .b{border:1px solid #c8c6c4;border-radius:2px;width:182px;height:43px;margin-left:8px;display:flex;align-items:center;justify-content:center}</style>
  <div class="t">${svg('<path d="M1 1h14L10 7v7H7V7z" stroke="#252423" stroke-width="1.500"/>', 16, 15)}<span class="f">${ft('Filters', 45)}</span><span class="e">${svg('<path d="M.5 6q6-9 12 0" stroke="#252423" stroke-width="1.500"/><circle cx="6.500" cy="6.200" r="1.600" stroke="#252423" stroke-width="1.200"/>', 13, 9)}</span>${dbl}</div>
  <div class="s">${mag}${ft('Search', 39)}</div><hr>
  ${[['Filters on this page', 98, 16], ['Filters on all pages', 96, 26]].map(f => `<div class="l" style="margin-top:${f[2]}px">${ft(f[0], f[1])}${svg('<path d="M0 1h2M4.500 1h2M9 1h2" stroke="#252423" stroke-width="1.500"/>', 11, 2)}</div><div class="b">${ft('Add data fields here', 105)}</div>`).join('')}`);

/* ---------- visualizations pane ---------- */
const ax = `<path d="M1 0v18M1 17.500h17" stroke="${K}"/>`;
const r = (x, y, w, h, f = '#fff', s = K) => `<rect x="${x + .5}" y="${y + .5}" width="${w}" height="${h}" fill="${f}" stroke="${s}"/>`;
const viz = [
  ax.replace('M1 17.500h17', '') + r(1, 2, 5, 4) + r(6, 2, 5, 4, L, B) + r(1, 10, 7, 4) + r(8, 10, 7, 4, G, '#888'),
  ax + r(3, 12, 4, 5) + r(3, 5, 4, 7, L, B) + r(11, 10, 4, 7) + r(11, 2, 4, 8, G, '#888'),
  ax.replace('M1 17.500h17', '') + r(1, 0, 16, 4, L, B) + r(1, 4, 8, 4, G, K) + r(1, 8, 14, 4) + r(1, 12, 10, 5, G),
  ax + r(2, 1, 4, 16, L, B) + r(6, 7, 3, 10) + r(9, 10, 4, 7, G, '#888') + r(13, 5, 4, 12),
  ax.replace('M1 17.500h17', '') + r(1, 2, 4, 4) + r(5, 2, 11, 4, L, B) + r(1, 10, 10, 4) + r(11, 10, 5, 4, G, '#888'),
  ax + r(3, 12, 4, 5) + r(3, 2, 4, 11, L, B) + r(11, 8, 4, 9) + r(11, 2, 4, 6, G, '#888'),
  ax + `<path d="M1 11l5-6 4 4 4-5 4 4" stroke="${K}"/><path d="M1 14l7-7 4 4 6-6" stroke="${B}"/>`,
  `<path d="M8 17L14 1l4 7v10z" fill="${G}" stroke="#888"/><path d="M.5 14l7-12 6 10-6 5z" fill="#fff" stroke="${K}"/><path d="M.5 17.500l6-7 3 2 4-5 4 10z" fill="${L}" stroke="${B}"/>`,
  ax + `<path d="M1 4l6 7 4-6 3 3 4-4v11l-4-3-3 3-4-3-6 4z" fill="${L}" stroke="${B}"/>`,
  ax + r(4, 3, 4, 14, L, B) + r(12, 3, 4, 14, G, '#888') + `<path d="M1 17l5-6 5 3 7-8" stroke="${K}" stroke-width="1.400"/>`,
  ax + r(2, 10, 4, 7, L, B) + r(8, 1, 4, 16) + r(13, 5, 4, 12, G, '#888') + `<path d="M1 17l5-6 5 3 7-8" stroke="${K}" stroke-width="1.400"/>`,
  `<path d="M.5 0v18M17.500 0v18" stroke="${K}"/><path d="M1 10h4v5H1zM13 10h4v6h-4zM7 6h4v4H7z" fill="#f0a040" stroke="#d8700f"/><path d="M1 6q4 9 8 5t8-5v5q-4 1-7 4t-9-4z" fill="${L}" stroke="${B}"/><path d="M1 3q6 8 9 4t7-3" stroke="#777" stroke-width="2"/>`,
  ax + r(3, 4, 3, 13) + `<path d="M6 4h5v7h-3" stroke="${K}"/>` + r(10, 1, 2, 10, B, B) + r(13, 1, 3, 16),
  r(0, 1, 17, 5, L, B) + r(3, 6, 11, 5, L, B) + r(6, 11, 6, 5, L, B),
  ax + `<path d="M4 5h3v3H4zM9 8h3v3H9zM5 12h3v3H5zM14 13h3v3h-3z" fill="${L}"/><path d="M14 2h3v3h-3zM10 13h2v2h-2z" fill="${K}"/>`,
  `<circle cx="9" cy="9" r="8.400" fill="#fff" stroke="${K}"/><path d="M9 .6A8.400 8.400 0 0 1 15 15L9 9z" fill="${L}" stroke="${B}"/>`,
  `<circle cx="9" cy="9" r="6.300" stroke="${L}" stroke-width="4.500"/><path d="M3 3a8.500 8.500 0 0 1 6-2.500v4a4 4 0 0 0-3.500 2z" fill="#fff" stroke="${K}"/><circle cx="9" cy="9" r="8.500" stroke="${B}"/><circle cx="9" cy="9" r="4" fill="#fff" stroke="${B}"/>`,
  r(0, 0, 8, 17, L, B) + r(8, 0, 9, 5) + r(8, 5, 5, 12) + r(13, 5, 4, 6, G) + r(13, 11, 4, 6) + `<path d="M0 9h8" stroke="${B}"/>`,
  `<circle cx="10" cy="7.500" r="5.800" fill="#fff" stroke="${K}"/><path d="M7 4l4-1 1 3-3 3zM12 8l3-1-1 4-2 1z" fill="#2a9d4a"/><path d="M5 1q-4 5-1 10t9 3l3-1M9.500 14v3M5 17.500h9" stroke="${K}"/>`,
  `<path d="M7 3l4 2 6-4v9l-7 4-6-3z" fill="${G}" stroke="#888"/><path d="M1 1l6 1v8H3L1 7zM11 10h6v4l-4 3-3-3zM1 11h6v5H4z" fill="${L}" stroke="${B}"/>`,
  `<path d="M10 0l6 18-7-5z" fill="#1b5fa8"/><path d="M10 0L2 17l7-4z" fill="#35b4e5"/>`,
  `<path d="M.5 14a8.500 8.500 0 0 1 17 0h-4a4.500 4.500 0 0 0-9 0z" fill="#fff" stroke="${K}"/><path d="M5 6.500a8.500 8.500 0 0 1 12.500 7.500h-4a4.500 4.500 0 0 0-6-4z" fill="${L}" stroke="${B}"/><path d="M8 14l4-5" stroke="${K}" stroke-width="2"/>`,
  r(0, 2, 17, 13) + `<text x="2" y="12.500" font-size="9" textLength="14" font-family="Open Sans" fill="#2b88c8">123</text>`,
  r(0, 1, 17, 16) + `<path d="M3 3v12" stroke="${K}"/><path d="M5 5h10M5 9h6M5 13h9" stroke="${B}" stroke-width="2"/>`,
  r(0, 2, 17, 13) + `<path d="M3.500 11L6 6l2.500 5z" fill="#3fa35b" stroke="#2a7d42"/><path d="M10 6h5.500l-2.750 5z" fill="#e04848" stroke="#c02020"/>`,
  r(0, 0, 17, 16) + `<path d="M1 2.500h16" stroke="${G}" stroke-width="3"/>` + r(3, 5, 3, 3, G, '#888') + r(3, 11, 3, 3, G, '#888') + `<path d="M9 9h9l-3 4v5h-3v-5z" fill="#fff" stroke="${K}"/>`,
  r(0, 0, 17, 16) + `<path d="M1 2h16" stroke="${G}" stroke-width="2.500"/><path d="M1 4h16M1 8h16M1 12.500h16M6.500 4v12M12 4v12" stroke="#666"/>`,
  r(0, 0, 17, 16) + `<path d="M1 2h16" stroke="${G}" stroke-width="2.500"/><path d="M7 12.500h10V16H7zM12 4h5v12h-5z" fill="${L}"/><path d="M1 4h16M1 8h16M1 12.500h16M6.500 4v12M12 4v12" stroke="${B}"/>`,
  `<text x="4" y="13.500" font-size="14" font-weight="700" font-family="Open Sans" fill="#2b7fc0">R</text>`,
  `<text x="0" y="13" font-size="14" font-weight="700" textLength="17.500" lengthAdjust="spacingAndGlyphs" font-family="Open Sans" fill="#2b7fc0">Py</text>`,
  `<path d="M1 0v18M1 9h6M1 14h5" stroke="${K}"/><path d="M1 3h12" stroke="${B}" stroke-width="1.500"/><circle cx="15" cy="3" r="2.300" fill="${L}" stroke="${B}"/><circle cx="10" cy="8.500" r="1.800" stroke="#777"/><circle cx="6" cy="13.500" r="1.800" stroke="#777"/>`,
  r(0, 6, 5, 4, L, B) + `<path d="M5 8.500h7M9 3v12M9 3h3M9 15h3" stroke="${K}"/>` + r(11, 0, 6, 4, L, B) + r(11, 6, 6, 4, L, B) + r(11, 13, 6, 4, L, B),
  `<path d="M.5 1.500h17v11H8l-4 5v-5H.5z" fill="#fff" stroke="${B}" stroke-width="1.300"/>`,
  `<path d="M3.500 4V.5h9l4 4v13h-13V10" fill="#fff" stroke="${K}"/><path d="M5 8h8M6 12h6" stroke="${B}"/>` + r(0, 5, 4, 4, L, B),
  `<path d="M4.500 1h9v8q-4.500 4-9 0zM4 3H1v4l3 2M14 3h3v4l-3 2" fill="#fff" stroke="${K}"/><path d="M9 11v3" stroke="${K}" stroke-width="2"/><path d="M4 .5h10M5 17.500h8v-2H5z" stroke="${B}" stroke-width="1.200"/>`,
  `<path d="M1.500.500h10l5 5v12h-15z" fill="#fff" stroke="${K}" stroke-width="1.500"/><path d="M5 11v5M9 13v3M13 9v7" stroke="${K}" stroke-width="2.500"/>`,
  r(1, 4, 16, 12) + `<text x="4" y="14" font-size="8.500" textLength="12.500" font-family="Open Sans" fill="#2b88c8">123</text><path d="M3 0h4L5.500 4H8l-6 8 1-5H0z" fill="#fcd679" stroke="#e07a10"/>`,
  `<path d="M8 1h9l-2 6-4 3-3 5H2V9" fill="${L}" stroke="${B}"/><path d="M16 2l-4 6-5 3-2 6" stroke="#fff" stroke-width="1.500"/><path d="M0 3q3-5 6 0l-3 6z" fill="#d8700f"/><circle cx="3" cy="3" r="1" fill="#fff"/><circle cx="13.500" cy="15.500" r="2" fill="#d8700f"/><path d="M15 10h3v3h-3zM8 13h3v3H8z" fill="#d8700f"/>`,
  `<path d="M9 .7L17.300 9 9 17.300.700 9zM5 5l8 8M13 5l-8 8" stroke="#8a3a9e" stroke-width="1.300" stroke-linejoin="round"/>`,
  `<path d="M1 2h9l7 7-7 7H1l6-7zM1 2l7 7M5 2l6 7-6 7M10 6L3 14M13 8l-7 8" stroke="#2b88c8" stroke-width="1.100"/>`,
  `<path d="M2 8.500h2M8 8.500h2M14 8.500h2" stroke="#252423" stroke-width="2"/>`
];
define('viz-pane', () => `<style>:host{display:flex;flex-direction:column;width:181px;box-sizing:border-box;border-left:1px solid #d8d6d4;font-size:11.500px;flex:none}svg{display:block}
  .t{display:flex;align-items:center;justify-content:space-between;height:37px;padding:1px 6px 0 8px;font-size:15px;font-weight:600;box-sizing:border-box}
  .m{display:flex;height:32px;margin:2px 0 0 8px}.m div{width:32px;height:32px;display:flex;align-items:center;justify-content:center}.m .on{background:#d2d0ce;border-radius:2px;margin-right:34px}
  .g{display:grid;grid-template-columns:repeat(6,28px);grid-auto-rows:28px;margin:6px 0 3px 6px;place-items:center}
  .x{display:flex;align-items:center;background:#fff;border:1px dashed #c8c6c4;border-radius:2px;width:168px;box-sizing:content-box;margin-left:4px}
  .k{display:flex;justify-content:space-between;align-items:center;height:26px;padding:0 6px 0 12px}
  .o{width:30px;height:13px;border:1px solid #797775;border-radius:8px;display:flex;align-items:center;justify-content:center;gap:1px;font-size:10px;line-height:13px;background:#fff;color:#605e5c}.o i{width:8px;height:8px;border-radius:50%;background:#605e5c}.o.y{background:#605e5c;border-color:#605e5c;color:#fff}.o.y i{background:#fff}</style>
  <div class="t">${ft('Visualizations', 98)}${dbl}</div><div style="padding-left:8px;line-height:16px;height:17px">${ft('Build visual', 60)}</div>
  <div class="m"><div class="on">${svg(`<path d="M0 1h20" stroke="${K}" stroke-width="1.300"/><path d="M1 6h22v7H1zM1 17h22v7H1z" fill="#117865" stroke="#252423" stroke-dasharray="2 1.500"/>`, 24, 25)}</div><div>${svg(`<path d="M10 23.500H1V1h11l6 6v4M11.500 1v6.500H18" stroke="${K}" stroke-width="1.300"/><path d="M24 9L15 18l1 2 2 0z" fill="#fff" stroke="${K}" stroke-width="1.200"/><path d="M9 24q3-1 4-5 3-1 4 2-2 4-8 3z" fill="#777" stroke="${K}"/>`, 25)}</div></div>
  ${svg('<path d="M0 12.500h15l9-8 9 8h147" stroke="#8a8886"/>', 180, 13)}
  <div class="g">${viz.map(v => svg(v, 18)).join('')}</div>
  <div style="border-top:1px solid #d8d6d4;padding:9px 0 0 12px;height:21px;line-height:16px;">${ft('Values', 33)}</div>
  <div class="x" style="height:24px">${ft('Add data fields here', 105, 'margin-left:10px')}</div>
  <div style="padding:12px 0 0 12px;line-height:16px;color:#605e5c;margin-bottom:3px">${ft('Drill through', 67)}</div>
  <div class="k">${ft('Cross-report', 66)}<span class="o"><i></i>${ft('Off', 13)}</span></div>
  <div class="k">${ft('Keep all filters', 73)}<span class="o y">${ft('On', 12)}<i></i></span></div>
  <div class="x" style="height:23px;margin-top:6px">${ft('Add drill-through fields here', 150, 'margin-left:8px')}</div>`);

/* ---------- data pane ---------- */
define('data-pane', () => `<style>:host{display:flex;flex-direction:column;flex:1;box-sizing:border-box;border-left:1px solid #d8d6d4;font-size:11.500px}svg{display:block}
  .t{display:flex;align-items:center;justify-content:space-between;height:38px;padding:0 6px 0 8px;font-size:15px;font-weight:600}
  .s{border:1px solid #605e5c;border-radius:2px;background:#fff;height:25px;margin:7px 4px 8px;display:flex;align-items:center;gap:5px;padding-left:7px;color:#605e5c;font-size:12px}
  .s svg{margin-bottom:3px}.s fit-text{margin-top:2px}
  .r{display:flex;align-items:center;height:24px;padding-left:10px}.r svg+svg{margin:0 5px 0 5px}</style>
  <div class="t">${ft('Data', 33)}${dbl}</div><div class="s">${mag}${ft('Search', 39)}</div>
  ${[['AC Cargo Incident Data', 124], ['AC IWT Risk Cargo Rou...', 131], ['AC Stations', 61], ['airport-codes_csv', 93], ['DateTable', 51], ['IWT Risk data', 70]].map(d => `<div class="r">${svg('<path d="M.5.500l5.500 5.500-5.500 5.500" stroke="#252423" stroke-width="1"/>', 7, 12)}${svg('<path d="M.6.600h12v11H.6zM.6 3h12M.6 6h12M.6 9h12M4.600 3v9M8.600 3v9" stroke="#252423" stroke-width="1"/>', 13, 12)}${ft(d[0], d[1])}</div>`).join('')}`);

/* ---------- application shell ---------- */
define('report-app', () => `<style>:host{display:flex;flex-direction:column;width:1599px;height:806px;background:#f3f2f1}
  main{display:flex;height:675px;border-bottom:1px solid #d8d6d4}.w{display:flex;flex-direction:column;width:1237px}.c{display:flex;height:640px}.c report-canvas{flex:1}.b{padding-left:39px}</style>
  <ribbon-bar></ribbon-bar>
  <main><div class="w"><div class="c"><view-rail></view-rail><report-canvas></report-canvas><filters-pane></filters-pane></div><div class="b"><page-tabs></page-tabs></div></div><viz-pane></viz-pane><data-pane></data-pane></main>`);
</script>
</body>
</html>
